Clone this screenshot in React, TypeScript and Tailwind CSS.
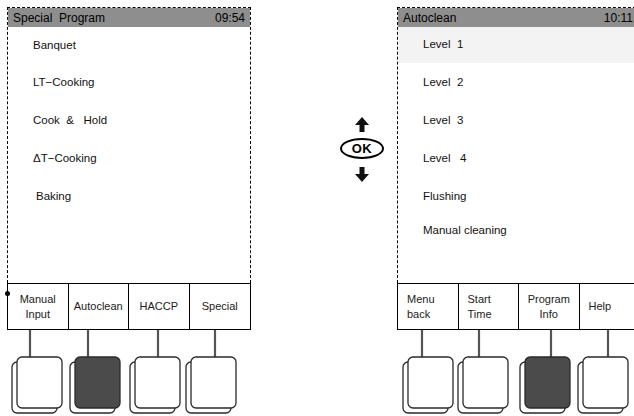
import React from "react";

type KeyProps = { stem: number; dark?: boolean; className?: string };

function HardKey({ stem, dark, className }: KeyProps) {
  return (
    <svg width="52" height="86" viewBox="0 0 52 86" className={className}>
      <line x1={stem} y1="0" x2={stem} y2="28" stroke="#555" strokeWidth="2.2" />
      <rect x="1" y="32" width="45" height="51" rx="5" fill="#fff" stroke="#2a2a2a" strokeWidth="1.3" />
      <rect x="6" y="27" width="45" height="51" rx="5" fill={dark ? "#4b4b4b" : "#fff"} stroke="#2a2a2a" strokeWidth="1.3" />
    </svg>
  );
}

function Row({ children, h, className = "" }: { children: React.ReactNode; h: string; className?: string }) {
  return <div className={`flex items-center pl-[25px] ${h} ${className}`}>{children}</div>;
}

export default function App() {
  return (
    <div className="w-[634px] h-[416px] overflow-hidden bg-white flex font-['Liberation_Sans',Arial,sans-serif] text-black">
      {/* Left device */}
      <div className="ml-[7px] mt-[7px] w-[244px] shrink-0 flex flex-col">
        <div className="h-[276px] border-t border-l border-r border-dashed border-black flex flex-col">
          <div className="h-[19px] bg-[#8e8e8e] flex items-center justify-between pl-[5px] pr-[5px] text-[12px] leading-none">
            <span className="whitespace-pre">Special  Program</span>
            <span>09:54</span>
          </div>
          <div className="flex flex-col pt-[1px] text-[11.5px] leading-none text-[#111]">
            <Row h="h-[36px]">Banquet</Row>
            <Row h="h-[38px]">LT−Cooking</Row>
            <Row h="h-[38px]"><span className="whitespace-pre">Cook  &amp;   Hold</span></Row>
            <Row h="h-[38px]">ΔT−Cooking</Row>
            <Row h="h-[38px]"><span className="pl-[3px]">Baking</span></Row>
          </div>
        </div>
        <div className="relative h-[47px] border border-black grid grid-cols-4 text-[11px] leading-[15px] text-[#222]">
          <span className="absolute left-[-3px] top-[7px] w-[5px] h-[5px] rounded-full bg-black" />
          <div className="border-r border-black flex items-center justify-center text-center">Manual<br />Input</div>
          <div className="border-r border-black flex items-center justify-center">Autoclean</div>
          <div className="border-r border-black flex items-center justify-center">HACCP</div>
          <div className="flex items-center justify-center">Special</div>
        </div>
        <div className="flex">
          <HardKey stem={19} className="ml-[4px]" />
          <HardKey stem={19} dark className="ml-[6px]" />
          <HardKey stem={29} className="ml-[8px]" />
          <HardKey stem={30} className="ml-[4px]" />
        </div>
      </div>

      {/* Middle navigation */}
      <div className="w-[146px] shrink-0 flex flex-col items-center pt-[117px] pl-[76px]">
        <svg width="14" height="15" viewBox="0 0 14 15">
          <polygon points="7,0 14,8 9.5,8 9.5,15 4.5,15 4.5,8 0,8" fill="#111" />
        </svg>
        <div className="mt-[6px] w-[44px] h-[21px] border-2 border-black rounded-[50%] flex items-center justify-center text-[13px] font-black tracking-[0.5px] leading-none">
          OK
        </div>
        <svg width="14" height="15" viewBox="0 0 14 15" className="mt-[8px]">
          <polygon points="4.5,0 9.5,0 9.5,7 14,7 7,15 0,7 4.5,7" fill="#111" />
        </svg>
      </div>

      {/* Right device */}
      <div className="mt-[7px] w-[244px] shrink-0 flex flex-col">
        <div className="h-[276px] border-t border-l border-r border-dashed border-black flex flex-col">
          <div className="h-[19px] bg-[#8e8e8e] flex items-center justify-between pl-[5px] pr-[7px] text-[12px] leading-none">
            <span>Autoclean</span>
            <span>10:11</span>
          </div>
          <div className="flex flex-col text-[11.5px] leading-none text-[#111]">
            <Row h="h-[36px]" className="bg-[#f3f3f3]"><span className="whitespace-pre">Level  1</span></Row>
            <Row h="h-[38px]"><span className="whitespace-pre pt-[1px]">Level  2</span></Row>
            <Row h="h-[38px]"><span className="whitespace-pre pt-[1px]">Level  3</span></Row>
            <Row h="h-[38px]"><span className="whitespace-pre pt-[1px]">Level   4</span></Row>
            <Row h="h-[38px]"><span className="pt-[1px]">Flushing</span></Row>
            <Row h="h-[30px]"><span className="pt-[1px]">Manual cleaning</span></Row>
          </div>
        </div>
        <div className="h-[47px] border border-black grid grid-cols-4 text-[11px] leading-[15px] text-[#222]">
          <div className="border-r border-black flex items-center pl-[9px]">Menu<br />back</div>
          <div className="border-r border-black flex items-center pl-[9px]">Start<br />Time</div>
          <div className="border-r border-black flex items-center justify-center text-center">Program<br />Info</div>
          <div className="flex items-center pl-[9px]">Help</div>
        </div>
        <div className="flex">
          <HardKey stem={20} className="ml-[5px]" />
          <HardKey stem={22} className="ml-[3px]" />
          <HardKey stem={32} dark className="ml-[10px]" />
          <HardKey stem={31} className="ml-[6px]" />
        </div>
      </div>
    </div>
  );
}
